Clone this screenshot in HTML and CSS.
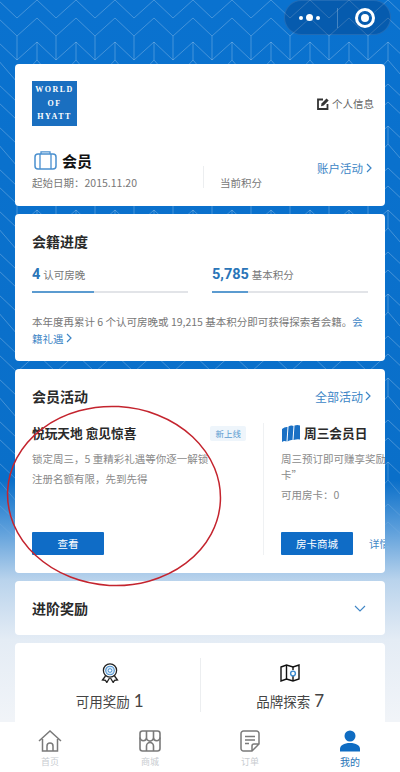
FILE: index.html
```html
<!DOCTYPE html>
<html lang="zh">
<head>
<meta charset="utf-8">
<title>会员</title>
<link rel="stylesheet" href="styles.css">
</head>
<body>
<div class="page">
  <svg class="bg-pattern" width="400" height="560" aria-hidden="true">
    <defs>
      <pattern id="geo" x="-2" y="-2" width="78" height="84" patternUnits="userSpaceOnUse">
        <path d="M0 2 L19 20 L39 2 L58 20 L78 2 M0 20 L19 38 L39 20 L58 38 L78 20 M19 38 V62 M58 38 V62 M0 44 L19 62 L39 44 L58 62 L78 44 M0 44 V62 L19 84 M39 44 V62 L19 84 M39 62 L58 84 M78 62 L58 84 M78 44 V62 M19 0 L19 2 M58 0 V2" fill="none" stroke="#fff" stroke-opacity=".24" stroke-width="1"/>
      </pattern>
      <linearGradient id="fade" x1="0" y1="0" x2="0" y2="1">
        <stop offset="0" stop-color="#fff"/>
        <stop offset=".82" stop-color="#fff"/>
        <stop offset="1" stop-color="#000"/>
      </linearGradient>
      <mask id="fadeMask"><rect width="400" height="560" fill="url(#fade)"/></mask>
    </defs>
    <rect width="400" height="560" fill="url(#geo)" mask="url(#fadeMask)"/>
  </svg>

  <div class="capsule">
    <span class="dots"><i></i><i class="big"></i><i></i></span>
    <span class="cap-line"></span>
    <span class="target"></span>
  </div>

  <main class="stack">
    <section class="card member">
      <div class="member-top">
        <div class="logo"><span>WORLD</span><span>OF</span><span>HYATT</span></div>
        <div class="info-link">
          <svg width="12" height="12" viewBox="0 0 12 12"><path d="M10.500 6v5H1V1.500h5" fill="none" stroke="#333" stroke-width="1.800"/><path d="M4 8.200 4.500 5.500 9.500.4l2.200 2.200-5 5z" fill="#333"/></svg>
          <span>个人信息</span>
        </div>
      </div>
      <div class="member-bottom">
        <div class="member-left">
          <div class="tier">
            <svg width="23" height="20" viewBox="0 0 23 20"><rect x="1" y="4" width="21" height="15" rx="3" fill="none" stroke="#4a90cf" stroke-width="1.500"/><path d="M7 4V1.800h9V4M6 4v15M17 4v15" fill="none" stroke="#4a90cf" stroke-width="1.300"/></svg>
            <span>会员</span>
          </div>
          <div class="since">起始日期：2015.11.20</div>
        </div>
        <span class="v-line"></span>
        <div class="points">当前积分</div>
        <div class="account link">账户活动<svg class="chev" width="6" height="10" viewBox="0 0 6 10"><path d="M1 1l4 4-4 4"/></svg></div>
      </div>
    </section>

    <section class="card progress">
      <h2>会籍进度</h2>
      <div class="meters">
        <div class="meter">
          <div class="meter-label"><b>4</b><span>认可房晚</span></div>
          <div class="track"><div class="fill" style="width:40%"></div></div>
        </div>
        <div class="meter">
          <div class="meter-label"><b>5,785</b><span>基本积分</span></div>
          <div class="track"><div class="fill" style="width:23%"></div></div>
        </div>
      </div>
      <p class="note">本年度再累计 6 个认可房晚或 19,215 基本积分即可获得探索者会籍。<span class="link">会籍礼遇 <svg class="chev" width="6" height="10" viewBox="0 0 6 10"><path d="M1 1l4 4-4 4"/></svg></span></p>
    </section>

    <section class="card activity">
      <div class="head-row">
        <h2>会员活动</h2>
        <div class="link all">全部活动<svg class="chev" width="6" height="10" viewBox="0 0 6 10"><path d="M1 1l4 4-4 4"/></svg></div>
      </div>
      <div class="scroller">
        <article class="promo first">
          <div class="promo-head">
            <h3>悦玩天地 愈见惊喜</h3>
            <span class="tag">新上线</span>
          </div>
          <p>锁定周三，5 重精彩礼遇等你逐一解锁</p>
          <p>注册名额有限，先到先得</p>
          <div class="actions"><button>查看</button></div>
        </article>
        <article class="promo second">
          <div class="promo-head">
            <svg width="18" height="17" viewBox="0 0 18 17"><path d="M0 4Q3 1.500 5.500 2L4.500 16.500Q2 15.500 0 17zM6.500 1.500Q9 0 11.500 1L10.500 15Q8 14.500 5.500 16.500zM12.500 .5Q15.500 -.3 18 .5V14.500Q15 14 11.500 15z" fill="#1a70c4"/></svg>
            <h3>周三会员日</h3>
          </div>
          <p class="wrap">周三预订即可赚享奖励房卡”</p>
          <p>可用房卡：0</p>
          <div class="actions"><button>房卡商城</button><span class="detail">详情</span></div>
        </article>
      </div>
    </section>

    <section class="card collapse">
      <h2>进阶奖励</h2>
      <svg width="12" height="7" viewBox="0 0 12 7"><path d="M1 1l5 5 5-5" fill="none" stroke="#3f86c6" stroke-width="1.100"/></svg>
    </section>

    <section class="card rewards">
      <div class="reward">
        <svg width="18" height="20" viewBox="0 0 18 20" fill="none"><circle cx="9" cy="7.500" r="6.600" stroke="#222" stroke-width="1.300"/><circle cx="9" cy="7.500" r="4.300" fill="#d5e7f6" stroke="#4a90cf" stroke-width="1.100"/><circle cx="9" cy="7.500" r="1.800" fill="#fff" stroke="#4a90cf"/><path d="M4.500 13 1.500 17l3 .3 1.300 2.200L8.500 15M13.500 13l3 4-3 .3-1.300 2.200L9.500 15" stroke="#222" stroke-width="1.300"/></svg>
        <div class="reward-text">可用奖励<b>1</b></div>
      </div>
      <div class="reward">
        <svg width="20" height="18" viewBox="0 0 20 18" fill="none"><path d="M1 3 6.500 1 13 3l6-2v14l-6 2-6.500-2L1 17z" stroke="#111" stroke-width="1.400"/><path d="M6.500 1v14M13 3v3M13 12v5" stroke="#111" stroke-width="1.400"/><circle cx="13" cy="9.500" r="2.400" stroke="#3c8bd0" stroke-width="1.400"/></svg>
        <div class="reward-text">品牌探索<b>7</b></div>
      </div>
    </section>
  </main>

  <nav class="tabbar">
    <div class="tab">
      <svg width="24" height="22" viewBox="0 0 24 22" fill="none"><path d="M1 11 12 1l11 10M4.500 9v12h15V9" stroke="#7a7a7a" stroke-width="1.500"/><path d="M9 21v-5a3 3 0 0 1 6 0v5" stroke="#7a7a7a" stroke-width="1.500"/></svg>
      <span>首页</span>
    </div>
    <div class="tab">
      <svg width="22" height="22" viewBox="0 0 22 22" fill="none"><rect x="1" y="1" width="20" height="20" rx="2.500" stroke="#7a7a7a" stroke-width="1.600"/><path d="M7.500 1v6.500M14.500 1v6.500M1 7.500a3.200 3.200 0 0 0 6.500 0 3.500 3.500 0 0 0 7 0 3.200 3.200 0 0 0 6.500 0M7.500 21v-5a3.500 3.500 0 0 1 7 0v5" stroke="#7a7a7a" stroke-width="1.600"/></svg>
      <span>商城</span>
    </div>
    <div class="tab">
      <svg width="20" height="22" viewBox="0 0 20 22" fill="none"><path d="M12 21H3.500A2.500 2.500 0 0 1 1 18.500v-15A2.500 2.500 0 0 1 3.500 1h13A2.500 2.500 0 0 1 19 3.500V14zM12 21v-5a2 2 0 0 1 2-2h5" stroke="#7a7a7a" stroke-width="1.500"/><path d="M5 6.500h10M5 10h10M5 13.500h4" stroke="#7a7a7a" stroke-width="1.500"/></svg>
      <span>订单</span>
    </div>
    <div class="tab active">
      <svg width="20" height="21" viewBox="0 0 20 21"><circle cx="10" cy="5.500" r="5.500" fill="#0f6cc2"/><path d="M0 21v-2.500C0 15 4 12.500 10 12.500s10 2.500 10 6V21z" fill="#0f6cc2"/></svg>
      <span>我的</span>
    </div>
  </nav>

  <svg class="circle-mark" width="224" height="190" viewBox="0 0 224 190" aria-hidden="true">
    <ellipse cx="112" cy="95" rx="106.500" ry="89.500" transform="rotate(3 112 95)" fill="none" stroke="#c4242e" stroke-width="1.500"/>
  </svg>
</div>
</body>
</html>
```

FILE: styles.css
```css
* { box-sizing: border-box; }
html, body { margin: 0; padding: 0; }
body { font-family: "Noto Sans CJK SC", "Noto Sans", sans-serif; color: #222; }

.page {
  position: relative;
  width: 400px;
  height: 772px;
  overflow: hidden;
  background: linear-gradient(180deg, #0a72cf 0, #0a6fc9 480px, #5d9fdb 530px, #b9d3ec 580px, #e4ecf5 640px, #f1f4f8 720px);
}
.bg-pattern { position: absolute; left: 0; top: 0; }

.capsule {
  position: absolute;
  left: 284px;
  top: 0;
  width: 107px;
  height: 35px;
  border-radius: 18px;
  background: rgba(0, 40, 100, .3);
  border: 1px solid rgba(255, 255, 255, .1);
  display: flex;
  align-items: center;
}
.dots { width: 52px; display: flex; justify-content: center; align-items: center; gap: 3px; padding-right: 3px; }
.dots i { width: 4px; height: 4px; border-radius: 50%; background: #fff; }
.dots i.big { width: 7px; height: 7px; }
.cap-line { width: 1px; height: 20px; background: rgba(255, 255, 255, .25); }
.target {
  margin-left: 17px;
  width: 20px;
  height: 20px;
  border: 3px solid #fff;
  border-radius: 50%;
  position: relative;
}
.target::after {
  content: "";
  position: absolute;
  left: 3px;
  top: 3px;
  width: 8px;
  height: 8px;
  border-radius: 50%;
  background: #fff;
}

.stack {
  position: relative;
  padding: 64px 15px 0 15px;
  display: flex;
  flex-direction: column;
  gap: 8px;
}
.card {
  background: #fff;
  border-radius: 4px;
  padding: 0 17px;
  flex: none;
}
h2 { margin: 0; font-size: 14px; font-weight: 700; line-height: 20px; color: #2a2a2a; }
.link { color: #3d86c6; }
.chev { fill: none; stroke: currentColor; stroke-width: 1.200; vertical-align: baseline; }

/* member card */
.member { height: 142px; padding-top: 17px; padding-right: 11px; }
.member-top { display: flex; justify-content: space-between; align-items: center; }
.logo {
  width: 45px;
  height: 45px;
  background: #1a6fc0;
  color: #fff;
  font-family: "Liberation Serif", serif;
  font-weight: 700;
  font-size: 8px;
  letter-spacing: 1.500px;
  line-height: 13.500px;
  display: flex;
  flex-direction: column;
  align-items: center;
  justify-content: center;
}
.info-link { display: flex; align-items: center; gap: 3px; font-size: 10.500px; color: #666; }
.member-bottom { margin-top: 22px; display: flex; align-items: flex-end; }
.member-left { width: 171px; }
.v-line { width: 1px; height: 22px; margin-bottom: 3px; background: #eceef0; }
.tier { display: flex; align-items: center; gap: 5px; padding-left: 2px; height: 24px; font-size: 15px; font-weight: 700; color: #111; }
.since { margin-top: 3px; font-size: 10.500px; line-height: 16px; color: #777; }
.points { margin-left: 16px; font-size: 10.500px; line-height: 16px; color: #777; }
.account { margin-left: auto; margin-right: 2px; font-size: 11.500px; line-height: 18px; padding-bottom: 14px; display: flex; align-items: center; gap: 3px; }

/* progress */
.progress { height: 147px; padding-top: 17px; }
.meters { margin-top: 12px; display: flex; gap: 24px; }
.meter { flex: 1; }
.meter-label { height: 22px; display: flex; align-items: center; gap: 3px; color: #777; font-size: 10.500px; }
.meter-label b { color: #2a75b8; font-family: Roboto, sans-serif; font-size: 14.500px; font-weight: 700; }
.track { margin-top: 6px; height: 2px; background: #e2e4e8; }
.fill { height: 2px; background: #5b9bd0; }
.note { margin: 20px 0 0; font-size: 10.500px; line-height: 17px; color: #777; }

/* activity */
.activity { height: 204px; padding: 17px 0 0 17px; overflow: hidden; }
.head-row { display: flex; justify-content: space-between; align-items: center; padding-right: 14px; }
.all { font-size: 12px; display: flex; align-items: center; gap: 2px; }
.scroller { margin-top: 17px; display: flex; height: 132px; }
.promo { flex: none; display: flex; flex-direction: column; }
.first { width: 232px; padding-right: 17px; border-right: 1px solid #eff1f3; }
.second { width: 130px; margin-left: 17px; }
.promo-head { display: flex; align-items: center; height: 20px; margin-bottom: 8px; }
.second .promo-head { gap: 4px; padding-left: 1px; }
h3 { margin: 0; font-size: 12.700px; font-weight: 700; line-height: 20px; color: #2a2a2a; white-space: nowrap; }
.tag { margin-left: auto; font-size: 8.500px; line-height: 15px; padding: 0 5px; color: #5b9bd0; background: #eef5fb; border-radius: 2px; }
.promo p { margin: 0 0 4px; font-size: 10.500px; line-height: 16px; color: #8a8a8a; white-space: nowrap; }
.promo p.wrap { white-space: normal; width: 116px; }
.actions { margin-top: auto; display: flex; align-items: center; gap: 16px; white-space: nowrap; }
button {
  width: 72px;
  height: 23px;
  border: 0;
  border-radius: 1px;
  padding: 0;
  background: #0f6cc6;
  color: #fff;
  font: inherit;
  font-size: 10.500px;
}
.detail { font-size: 10.500px; color: #3d86c6; }

/* collapse */
.collapse { height: 54px; display: flex; justify-content: space-between; align-items: center; padding-right: 19px; }

/* rewards */
.rewards { height: 100px; padding: 15px 0 0; display: flex; align-items: flex-start; }
.reward { flex: 1; height: 54px; padding-top: 5px; display: flex; flex-direction: column; align-items: center; }
.reward svg { height: 20px; flex: none; }
.reward:first-child { border-right: 1px solid #eceef0; padding-left: 5px; }
.reward:last-child { padding-right: 5px; }
.reward-text { margin-top: 8px; font-size: 13.500px; line-height: 20px; color: #444; display: flex; align-items: center; gap: 4px; }
.reward-text b { font-family: Lato, sans-serif; font-weight: 400; font-size: 17px; }

/* tab bar */
.tabbar {
  position: absolute;
  left: 0;
  right: 0;
  bottom: 0;
  height: 50px;
  padding-top: 8px;
  background: #fff;
  display: flex;
}
.tab { flex: 1; height: 42px; display: flex; flex-direction: column; align-items: center; gap: 4px; font-size: 9px; line-height: 12px; color: #c8ccd0; }
.tab svg { height: 22px; flex: none; }
.tab.active { color: #2a75b8; font-size: 10px; }

.circle-mark { position: absolute; left: 2px; top: 401px; }
```
